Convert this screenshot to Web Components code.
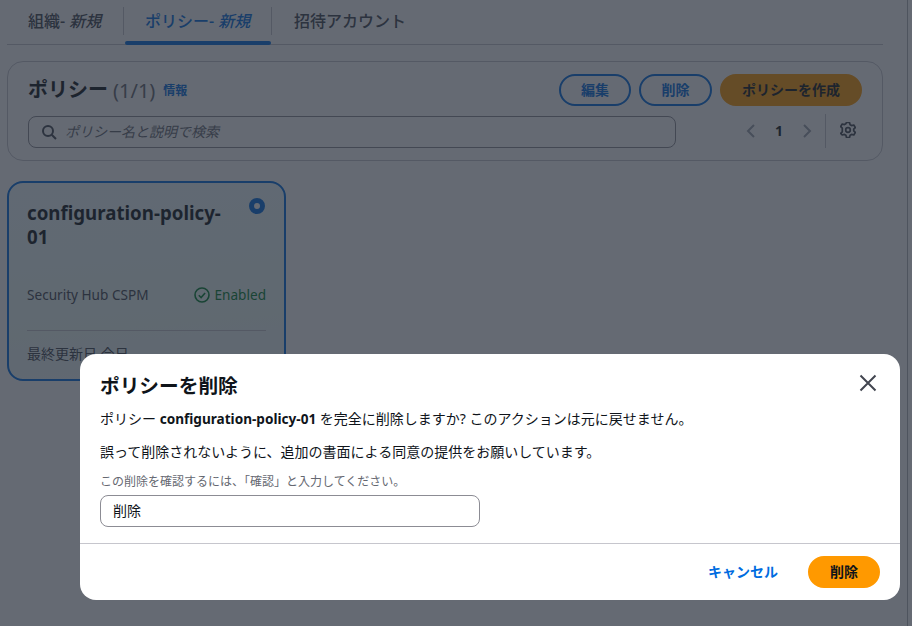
<!DOCTYPE html>
<html lang="ja">
<head>
<meta charset="utf-8">
<title>ポリシー</title>
<style>
  html, body { margin: 0; height: 100%; background: #fff; overflow: hidden; }
  body { font-family: "Noto Sans", "Noto Sans CJK JP", sans-serif; color: #0f141a; }
</style>
</head>
<body>
<policy-page>
  <tab-bar>
    <tab-item>組織- <i>新規</i></tab-item>
    <tab-item active>ポリシー- <i>新規</i></tab-item>
    <tab-item last>招待アカウント</tab-item>
  </tab-bar>
  <policy-panel heading="ポリシー" count="(1/1)"></policy-panel>
  <policy-card name="configuration-policy-01" service="Security Hub CSPM" status="Enabled" updated="最終更新日 今日"></policy-card>
</policy-page>
<modal-overlay></modal-overlay>
<delete-modal policy="configuration-policy-01"></delete-modal>

<script>
function shadow(el, html) {
  el.attachShadow({ mode: 'open' }).innerHTML = html
}

class PolicyPage extends HTMLElement {
  connectedCallback() {
    shadow(this, `<style>
      :host { display: block; width: 876px; padding-left: 7px; }
    </style><slot></slot>`)
  }
}

class TabBar extends HTMLElement {
  connectedCallback() {
    shadow(this, `<style>
      :host { display: flex; height: 44px; border-bottom: 1px solid #c6c6cd; }
    </style><slot></slot>`)
  }
}

class TabItem extends HTMLElement {
  connectedCallback() {
    shadow(this, `<style>
      :host { display: block; position: relative; box-sizing: border-box; height: 44px; padding: 10px 0 0 0; font-size: 16px; line-height: 22px; font-weight: 500; color: #424650; white-space: nowrap; }
      :host([active]) { color: #006ce0; }
      :host(:not([active]):not([last])) { width: 117px; padding-left: 21px; }
      :host([active]) { width: 148px; padding-left: 21px; }
      :host([last]) { padding-left: 22px; }
      :host(:not([last]))::after { content: ""; position: absolute; right: 0; top: 7px; height: 28px; width: 1px; background: #c6c6cd; }
      :host([active])::before { content: ""; position: absolute; left: 1px; right: 1px; bottom: -1px; height: 4px; border-radius: 2px; background: #006ce0; }
    </style><slot></slot>`)
  }
}

class ActionButton extends HTMLElement {
  connectedCallback() {
    shadow(this, `<style>
      :host { display: inline-flex; align-items: center; justify-content: center; box-sizing: border-box; height: 32px; padding: 0 20px; border: 2px solid #006ce0; border-radius: 16px; font-size: 14px; font-weight: 600; line-height: 20px; color: #006ce0; background: #fff; white-space: nowrap; }
      :host([primary]) { background: #ff9900; border-color: #ff9900; color: #0f141a; }
      :host([link]) { background: transparent; border-color: transparent; }
    </style><slot></slot>`)
  }
}

class SearchBox extends HTMLElement {
  connectedCallback() {
    shadow(this, `<style>
      :host { display: flex; align-items: center; box-sizing: border-box; width: 648px; height: 32px; border: 1px solid #8c8c94; border-radius: 8px; padding-left: 12px; background: #fff; }
      svg { width: 16px; height: 16px; flex: none; }
      span { margin: 0 0 2px 8px; font-size: 14px; font-style: italic; color: #656871; }
    </style>
    <svg viewBox="0 0 16 16" fill="none" stroke="#424650" stroke-width="2"><circle cx="7" cy="7" r="5"/><path d="M10.7 10.7 15 15"/></svg>
    <span>${this.getAttribute('placeholder')}</span>`)
  }
}

class PagerControl extends HTMLElement {
  connectedCallback() {
    shadow(this, `<style>
      :host { display: flex; align-items: center; height: 34px; }
      svg { display: block; flex: none; }
      .num { width: 42px; text-align: center; font-size: 14px; font-weight: 700; color: #0f141a; }
      .sep { width: 1px; height: 34px; background: #c6c6cd; margin: 0 14px 0 9px; }
      .gear { margin-top: -2px; }
    </style>
    <svg width="16" height="16" viewBox="0 0 16 16" fill="none" stroke="#9ba0aa" stroke-width="2"><path d="M12 2 6 8l6 6"/></svg>
    <span class="num">1</span>
    <svg width="16" height="16" viewBox="0 0 16 16" fill="none" stroke="#9ba0aa" stroke-width="2"><path d="m4 2 6 6-6 6"/></svg>
    <span class="sep"></span>
    <svg class="gear" width="16" height="16" viewBox="0 0 16 16" fill="none" stroke="#424650" stroke-width="1.7" stroke-linejoin="round"><path d="M6.5 1h3l.6 2.2 1.5.9 2.2-.6 1.5 2.6-1.6 1.6v1.6l1.6 1.6-1.5 2.6-2.2-.6-1.5.9-.6 2.2h-3l-.6-2.2-1.5-.9-2.2.6L.7 11.9l1.6-1.6V6.7L.7 5.1l1.5-2.6 2.2.6 1.5-.9z" transform="translate(0 -.5)"/><circle cx="8" cy="8" r="2.3"/></svg>`)
  }
}

class PolicyPanel extends HTMLElement {
  connectedCallback() {
    const heading = this.getAttribute('heading')
    const count = this.getAttribute('count')
    shadow(this, `<style>
      :host { display: block; box-sizing: border-box; height: 100px; margin-top: 16px; border: 1px solid #c6c6cd; border-radius: 16px; padding: 12px 20px 0; background: #fff; }
      .top { display: flex; align-items: center; height: 32px; }
      h2 { margin: 0; font-size: 20px; line-height: 28px; font-weight: 700; color: #0f141a; }
      .count { margin-left: 5px; font-size: 20px; font-weight: 400; color: #656871; }
      .info { margin-left: 8px; font-size: 12px; font-weight: 600; color: #006ce0; }
      .actions { margin-left: auto; display: flex; gap: 8px; }
      .bottom { display: flex; align-items: center; margin-top: 10px; }
      pager-control { margin-left: 66px; margin-top: -3px; }
    </style>
    <div class="top">
      <h2>${heading}</h2><span class="count">${count}</span><span class="info">情報</span>
      <div class="actions">
        <action-button style="width:72px">編集</action-button>
        <action-button style="width:73px">削除</action-button>
        <action-button primary style="width:142px">ポリシーを作成</action-button>
      </div>
    </div>
    <div class="bottom">
      <search-box placeholder="ポリシー名と説明で検索"></search-box>
      <pager-control></pager-control>
    </div>`)
  }
}

class PolicyCard extends HTMLElement {
  connectedCallback() {
    const a = n => this.getAttribute(n)
    shadow(this, `<style>
      :host { display: block; position: relative; box-sizing: border-box; width: 279px; height: 200px; margin-top: 20px; padding: 18px 18px 0 18px; border: 2px solid #006ce0; border-radius: 16px; background: linear-gradient(175deg, #f0fbff, #eefaf6 70%, #f0f6fb); }
      h3 { margin: 0; width: 215px; font-size: 18.7px; line-height: 24px; font-weight: 700; color: #0f141a; }
      .radio { position: absolute; top: 15px; right: 19px; width: 16px; height: 16px; box-sizing: border-box; border: 5px solid #006ce0; border-radius: 50%; background: #fff; }
      .row { display: flex; align-items: center; justify-content: space-between; margin-top: 36px; font-size: 13.6px; line-height: 20px; color: #424650; }
      .status { display: inline-flex; align-items: center; gap: 5px; color: #00802f; }
      svg { display: block; }
      hr { border: 0; border-top: 1px solid #c6c6cd; margin: 25px 0 0; }
      .foot { margin-top: 13px; font-size: 14px; line-height: 20px; color: #424650; }
    </style>
    <span class="radio"></span>
    <h3>configuration-policy-<br>01</h3>
    <div class="row"><span>${a('service')}</span>
      <span class="status"><svg width="16" height="16" viewBox="0 0 16 16" fill="none" stroke="#00802f" stroke-width="1.6"><circle cx="8" cy="8" r="7"/><path d="m4.8 8.2 2.3 2.3 4-4.6"/></svg>${a('status')}</span></div>
    <hr>
    <div class="foot">${a('updated')}</div>`)
  }
}

class ModalOverlay extends HTMLElement {
  connectedCallback() {
    shadow(this, `<style>
      :host { display: block; position: fixed; inset: 0; background: rgba(35,43,55,.7); }
      div { position: absolute; top: 0; bottom: 0; left: 907px; width: 1px; background: rgba(35,43,55,.35); }
    </style><div></div>`)
  }
}

class DeleteModal extends HTMLElement {
  connectedCallback() {
    const policy = this.getAttribute('policy')
    shadow(this, `<style>
      :host { display: block; position: fixed; left: 80px; top: 354px; width: 820px; height: 246px; box-sizing: border-box; background: #fff; border-radius: 16px; color: #0f141a; }
      .head { display: flex; justify-content: space-between; padding: 18px 22px 0 20px; }
      h2 { margin: 0; font-size: 19.7px; line-height: 28px; font-weight: 700; }
      svg { display: block; margin-top: 1px; }
      .body { padding: 9px 20px 0; font-size: 14px; line-height: 20px; }
      p { margin: 0 0 12px; }
      p + p { margin-bottom: 13px; }
      p:first-child { margin-bottom: 13px; }
      b { font-size: 13.6px; }
      label { display: block; margin-top: -1px; font-size: 12px; line-height: 16px; color: #656871; }
      .field { box-sizing: border-box; width: 380px; height: 32px; margin-top: 5px; padding: 0 12px; border: 1px solid #8c8c94; border-radius: 8px; font-size: 14px; line-height: 30px; color: #0f141a; }
      .foot { display: flex; justify-content: flex-end; align-items: center; gap: 8px; box-sizing: border-box; height: 57px; margin-top: 16px; padding: 0 20px 0 0; border-top: 1px solid #c6c6cd; }
    </style>
    <div class="head"><h2>ポリシーを削除</h2>
      <svg width="20" height="20" viewBox="0 0 16 16" fill="none" stroke="#424650" stroke-width="1.6"><path d="m2 2 12 12M14 2 2 14"/></svg></div>
    <div class="body">
      <p>ポリシー <b>${policy}</b> を完全に削除しますか? このアクションは元に戻せません。</p>
      <p>誤って削除されないように、追加の書面による同意の提供をお願いしています。</p>
      <label>この削除を確認するには、「確認」と入力してください。</label>
      <div class="field">削除</div>
    </div>
    <div class="foot">
      <action-button link>キャンセル</action-button>
      <action-button primary style="width:72px">削除</action-button>
    </div>`)
  }
}

customElements.define('policy-page', PolicyPage)
customElements.define('tab-bar', TabBar)
customElements.define('tab-item', TabItem)
customElements.define('action-button', ActionButton)
customElements.define('search-box', SearchBox)
customElements.define('pager-control', PagerControl)
customElements.define('policy-panel', PolicyPanel)
customElements.define('policy-card', PolicyCard)
customElements.define('modal-overlay', ModalOverlay)
customElements.define('delete-modal', DeleteModal)
</script>
</body>
</html>
